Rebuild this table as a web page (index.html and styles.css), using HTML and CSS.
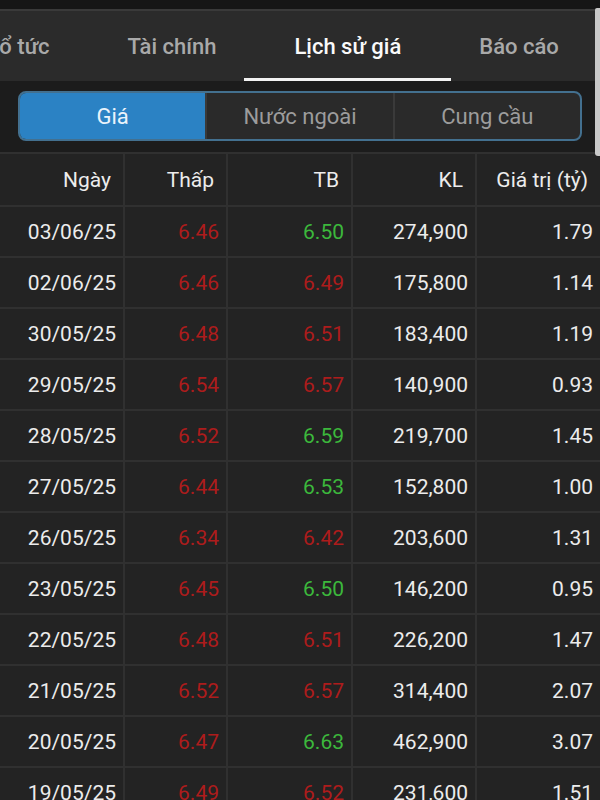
FILE: index.html
```html
<!DOCTYPE html>
<html lang="vi">
<head>
  <meta charset="UTF-8">
  <title>Lịch sử giá</title>
  <link rel="stylesheet" href="styles.css">
</head>
<body>
<div class="screen">
  <div class="topbar"></div>
  <div class="tabs">
    <div class="tab">Cổ tức</div>
    <div class="tab">Tài chính</div>
    <div class="tab active">Lịch sử giá</div>
    <div class="tab">Báo cáo</div>
  </div>
  <div class="seg-wrap">
    <div class="seg">
      <div class="seg-item selected">Giá</div>
      <div class="seg-item">Nước ngoài</div>
      <div class="seg-item">Cung cầu</div>
    </div>
  </div>
  <table class="prices">
    <colgroup>
      <col class="c-date"><col class="c-low"><col class="c-avg"><col class="c-vol"><col class="c-val">
    </colgroup>
    <thead>
      <tr><th>Ngày</th><th>Thấp</th><th>TB</th><th>KL</th><th>Giá trị (tỷ)</th></tr>
    </thead>
    <tbody>
      <tr><td>03/06/25</td><td class="dn">6.46</td><td class="up">6.50</td><td>274,900</td><td>1.79</td></tr>
      <tr><td>02/06/25</td><td class="dn">6.46</td><td class="dn">6.49</td><td>175,800</td><td>1.14</td></tr>
      <tr><td>30/05/25</td><td class="dn">6.48</td><td class="dn">6.51</td><td>183,400</td><td>1.19</td></tr>
      <tr><td>29/05/25</td><td class="dn">6.54</td><td class="dn">6.57</td><td>140,900</td><td>0.93</td></tr>
      <tr><td>28/05/25</td><td class="dn">6.52</td><td class="up">6.59</td><td>219,700</td><td>1.45</td></tr>
      <tr><td>27/05/25</td><td class="dn">6.44</td><td class="up">6.53</td><td>152,800</td><td>1.00</td></tr>
      <tr><td>26/05/25</td><td class="dn">6.34</td><td class="dn">6.42</td><td>203,600</td><td>1.31</td></tr>
      <tr><td>23/05/25</td><td class="dn">6.45</td><td class="up">6.50</td><td>146,200</td><td>0.95</td></tr>
      <tr><td>22/05/25</td><td class="dn">6.48</td><td class="dn">6.51</td><td>226,200</td><td>1.47</td></tr>
      <tr><td>21/05/25</td><td class="dn">6.52</td><td class="dn">6.57</td><td>314,400</td><td>2.07</td></tr>
      <tr><td>20/05/25</td><td class="dn">6.47</td><td class="up">6.63</td><td>462,900</td><td>3.07</td></tr>
      <tr><td>19/05/25</td><td class="dn">6.49</td><td class="dn">6.52</td><td>231,600</td><td>1.51</td></tr>
    </tbody>
  </table>
  <div class="scroll-thumb"></div>
</div>
</body>
</html>
```

FILE: styles.css
```css
html, body { margin: 0; padding: 0; }
body { background: #1c1c1c; font-family: Roboto, "Noto Sans", sans-serif; overflow: hidden; }
.screen { position: relative; width: 600px; height: 800px; overflow: hidden; }

.topbar { height: 9px; background: #161616; border-bottom: 2px solid #3a3a3a; }

.tabs { display: flex; height: 70px; background: #2b2b2b; margin-left: -54px; }
.tab { position: relative; padding: 0 39px; display: flex; align-items: center; font-size: 22px; font-weight: 500; color: #a9a9a9; white-space: nowrap; }
.tab.active { color: #fafafa; }
.tab.active::after { content: ""; position: absolute; left: -11px; right: -11px; bottom: 0; height: 3px; background: #f2f2f2; }

.seg-wrap { padding: 10px 18px 11px 18px; }
.seg { display: flex; height: 46px; border: 2px solid #43708f; border-radius: 8px; overflow: hidden; background: #2a2a2a; }
.seg-item { flex: 1; display: flex; align-items: center; justify-content: center; font-size: 22px; color: #9c9c9c; border-left: 2px solid #3a3a3a; }
.seg-item:first-child { border-left: none; }
.seg-item.selected { background: #2b82c4; color: #eaf3fb; }

.prices { width: 600px; border-collapse: collapse; table-layout: fixed; background: #232323; }
.c-date { width: 124px; }
.c-low { width: 103px; }
.c-avg { width: 125px; }
.c-vol { width: 124px; }
.c-val { width: 124px; }
.prices th, .prices td { border: 2px solid #303030; text-align: right; white-space: nowrap; }
.prices th:first-child, .prices td:first-child { border-left: none; }
.prices th:last-child, .prices td:last-child { border-right: none; }
.prices th { height: 51px; padding: 0 12px 0 0; font-size: 21px; font-weight: 400; color: #ececec; }
.prices td { height: 49px; padding: 0 7px 0 0; font-size: 21px; color: #ececec; }
.prices td.dn { color: #ad1c1c; }
.prices td.up { color: #3cb83c; }

.scroll-thumb { position: absolute; right: 0; top: 8px; width: 5px; height: 148px; background: #c9c9c9; border-radius: 2px 0 0 3px; }
```
